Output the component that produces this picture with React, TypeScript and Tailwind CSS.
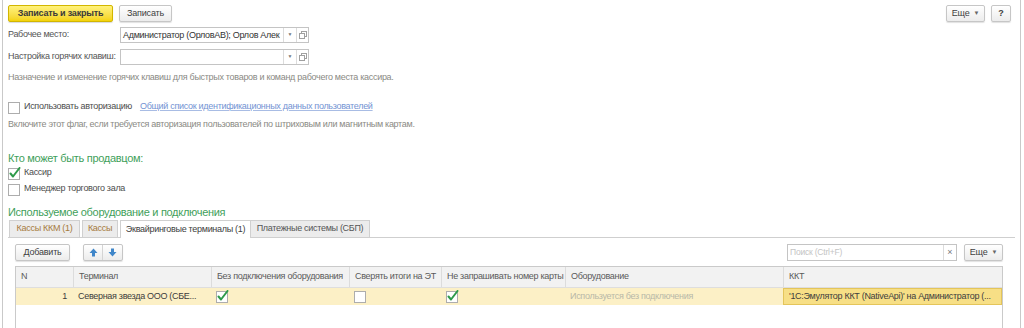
import React from "react";

const font = { fontFamily: '"Liberation Sans", Arial, sans-serif' };

function Btn({ children, className = "" }: { children: React.ReactNode; className?: string }) {
  return (
    <div
      className={`h-[17px] flex items-center justify-center border border-[#c6c6c6] rounded-[2px] bg-gradient-to-b from-white to-[#ececec] text-[9px] tracking-[-0.2px] text-[#404040] shadow-[0_1px_1px_rgba(0,0,0,0.12)] ${className}`}
    >
      {children}
    </div>
  );
}

function Caret() {
  return <span className="ml-[4px] text-[6px] text-[#666]">▼</span>;
}

function OpenIcon() {
  return (
    <svg width="8" height="8" viewBox="0 0 8 8">
      <rect x="2.5" y="0.5" width="5" height="5" fill="none" stroke="#a0a0a0" />
      <rect x="0.5" y="2.5" width="5" height="5" fill="#fff" stroke="#a0a0a0" />
    </svg>
  );
}

function Check({ checked }: { checked: boolean }) {
  return (
    <svg width="13" height="13" viewBox="0 0 13 13" className="shrink-0">
      <rect x="0.5" y="1.5" width="11" height="11" fill="#fff" stroke="#adadad" />
      {checked && (
        <path d="M2.5 6.5 L5 9.5 L11.5 1" fill="none" stroke="#2e9a4a" strokeWidth="2" strokeLinecap="round" strokeLinejoin="round" />
      )}
    </svg>
  );
}

function Field({ label, value }: { label: string; value: string }) {
  return (
    <div className="flex items-center h-[16px]">
      <div className="w-[112px] text-[9px] tracking-[-0.3px] text-[#555] whitespace-nowrap">{label}</div>
      <div className="flex h-[16px] border border-[#c4c4c4] bg-white">
        <div className="w-[162px] px-[2px] text-[9px] tracking-[-0.3px] text-[#333] leading-[14px] whitespace-nowrap overflow-hidden">{value}</div>
        <div className="w-[13px] border-l border-[#dcdcdc] flex items-center justify-center text-[5px] text-[#777]">▼</div>
        <div className="w-[12px] border-l border-[#dcdcdc] flex items-center justify-center">
          <OpenIcon />
        </div>
      </div>
    </div>
  );
}

const cols = [
  { t: "N", w: "w-[57px]" },
  { t: "Терминал", w: "w-[138px]" },
  { t: "Без подключения оборудования", w: "w-[138px]" },
  { t: "Сверять итоги на ЭТ", w: "w-[92px]" },
  { t: "Не запрашивать номер карты", w: "w-[124px]" },
  { t: "Оборудование", w: "w-[218px]" },
  { t: "ККТ", w: "flex-1" },
];

export default function App() {
  return (
    <div className="w-[1024px] h-[328px] bg-white overflow-hidden" style={font}>
      <div className="ml-[2px] w-[1019px] h-[328px] border-x border-[#c9c9c9] pl-[5px] pt-[5px]">
        {/* command bar */}
        <div className="flex items-center h-[17px]">
          <div className="w-[105px] h-[17px] flex items-center justify-center rounded-[2px] border border-[#d2b600] bg-gradient-to-b from-[#fff27a] to-[#f4d300] text-[9px] tracking-[-0.2px] font-bold text-[#3a3a3a] shadow-[0_1px_1px_rgba(0,0,0,0.15)]">
            Записать и закрыть
          </div>
          <Btn className="ml-[6px] w-[53px]">Записать</Btn>
          <div className="flex-1" />
          <Btn className="w-[39px]">
            Еще<Caret />
          </Btn>
          <Btn className="ml-[6px] w-[20px] font-bold">?</Btn>
          <div className="w-[9px]" />
        </div>

        <div className="mt-[5px] flex flex-col gap-[6px]">
          <Field label="Рабочее место:" value="Администратор (ОрловАВ); Орлов Алек" />
          <Field label="Настройка горячих клавиш:" value="" />
        </div>

        <div className="mt-[6px] text-[9px] tracking-[-0.3px] text-[#8a8a84] h-[12px] leading-[12px] whitespace-nowrap">
          Назначение и изменение горячих клавиш для быстрых товаров и команд рабочего места кассира.
        </div>

        <div className="mt-[17px] flex items-center h-[14px] text-[9px] tracking-[-0.3px]">
          <Check checked={false} />
          <span className="ml-[3px] text-[#4d4d4d]">Использовать авторизацию</span>
          <span className="ml-[8px] text-[#7393d3] underline decoration-[#a8bce4]">
            Общий список идентификационных данных пользователей
          </span>
        </div>
        <div className="mt-[4px] text-[9px] tracking-[-0.3px] text-[#8a8a84] h-[12px] leading-[12px] whitespace-nowrap">
          Включите этот флаг, если требуется авторизация пользователей по штриховым или магнитным картам.
        </div>

        <div className="mt-[21px] text-[11px] tracking-[-0.3px] text-[#3f9f5b] h-[15px] leading-[15px]">Кто может быть продавцом:</div>
        <div className="flex items-center h-[14px] text-[9px] tracking-[-0.3px] text-[#4d4d4d]">
          <Check checked />
          <span className="ml-[3px]">Кассир</span>
        </div>
        <div className="mt-[2px] flex items-center h-[14px] text-[9px] tracking-[-0.3px] text-[#4d4d4d]">
          <Check checked={false} />
          <span className="ml-[3px]">Менеджер торгового зала</span>
        </div>

        <div className="mt-[9px] text-[11px] tracking-[-0.3px] text-[#3f9f5b] h-[15px] leading-[15px]">
          Используемое оборудование и подключения
        </div>

        {/* tabs */}
        <div className="flex items-end h-[18px] border-b border-[#cfcfcf] mr-[5px] text-[9px] tracking-[-0.3px]">
          <div className="ml-[1px] w-[71px] h-[17px] flex items-center justify-center border border-b-0 border-[#d0d0d0] bg-[#ececec] text-[#a67b3e]">
            Кассы ККМ (1)
          </div>
          <div className="ml-[2px] w-[36px] h-[17px] flex items-center justify-center border border-b-0 border-[#d0d0d0] bg-[#ececec] text-[#a67b3e]">
            Кассы
          </div>
          <div className="ml-[2px] w-[131px] h-[18px] -mb-px flex items-center justify-center border border-b-0 border-[#d0d0d0] bg-white text-[#404040]">
            Эквайринговые терминалы (1)
          </div>
          <div className="w-[119px] h-[17px] flex items-center justify-center border border-b-0 border-l-0 border-[#d0d0d0] bg-[#ececec] text-[#555]">
            Платежные системы (СБП)
          </div>
        </div>

        {/* table toolbar */}
        <div className="mt-[6px] ml-[7px] mr-[17px] flex items-center h-[17px]">
          <Btn className="w-[55px]">Добавить</Btn>
          <div className="ml-[13px] flex h-[17px] border border-[#c6c6c6] rounded-[2px] bg-gradient-to-b from-white to-[#ececec] shadow-[0_1px_1px_rgba(0,0,0,0.12)]">
            <div className="w-[19px] flex items-center justify-center border-r border-[#d4d4d4]">
              <svg width="9" height="9" viewBox="0 0 9 9">
                <path d="M4.5 0.5 L8.5 5 H6 V8.5 H3 V5 H0.5 Z" fill="#3f86c9" />
              </svg>
            </div>
            <div className="w-[19px] flex items-center justify-center">
              <svg width="9" height="9" viewBox="0 0 9 9">
                <path d="M4.5 8.5 L8.5 4 H6 V0.5 H3 V4 H0.5 Z" fill="#3f86c9" />
              </svg>
            </div>
          </div>
          <div className="flex-1" />
          <div className="flex h-[17px] border border-[#c4c4c4] bg-white">
            <div className="w-[155px] px-[2px] text-[8.5px] tracking-[-0.2px] leading-[15px] text-[#c4c4c4]">Поиск (Ctrl+F)</div>
            <div className="w-[13px] border-l border-[#dcdcdc] flex items-center justify-center text-[9px] text-[#777]">×</div>
          </div>
          <Btn className="ml-[7px] w-[39px]">
            Еще<Caret />
          </Btn>
        </div>

        {/* table */}
        <div className="mt-[5px] ml-[7px] mr-[17px] h-[80px] border border-[#cacaca] text-[9px] tracking-[-0.3px]">
          <div className="flex h-[21px] bg-[#f2f2f2] border-b border-[#dedede] text-[#5a5a5a]">
            {cols.map((c, i) => (
              <div
                key={c.t}
                className={`${c.w} px-[5px] flex items-center whitespace-nowrap overflow-hidden ${i > 0 ? "border-l border-[#dcdcdc]" : ""}`}
              >
                {c.t}
              </div>
            ))}
          </div>
          <div className="flex h-[17px] bg-[#fcf0c6] text-[#3d3d3d]">
            <div className="w-[57px] px-[6px] flex items-center justify-end">1</div>
            <div className="w-[138px] px-[5px] flex items-center whitespace-nowrap overflow-hidden">Северная звезда ООО (СБЕ...</div>
            <div className="w-[138px] px-[5px] flex items-center">
              <Check checked />
            </div>
            <div className="w-[92px] px-[5px] flex items-center">
              <Check checked={false} />
            </div>
            <div className="w-[124px] px-[5px] flex items-center">
              <Check checked />
            </div>
            <div className="w-[218px] px-[5px] flex items-center text-[#b8b8a8] whitespace-nowrap">Используется без подключения</div>
            <div className="flex-1 px-[5px] flex items-center bg-[#f7df86] border border-[#e4c55a] whitespace-nowrap overflow-hidden">
              '1С:Эмулятор ККТ (NativeApi)' на Администратор (...
            </div>
          </div>
        </div>
      </div>
    </div>
  );
}
